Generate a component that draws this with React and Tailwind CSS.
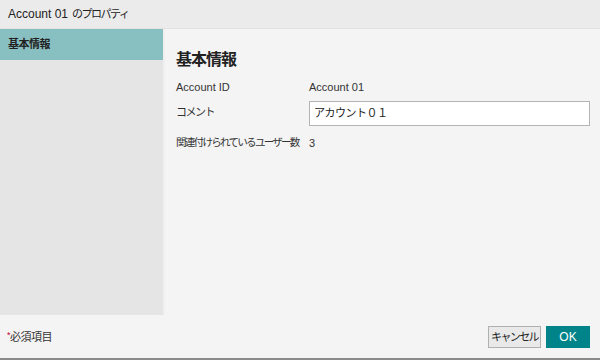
import React from 'react';

const font = { fontFamily: '"Liberation Sans", "Noto Sans CJK JP", sans-serif' };

const Row = ({ label, labelClass = 'text-[11px]', className = '', children }) => (
    <div className={`flex items-center ${className}`}>
        <div className={`w-[133px] shrink-0 whitespace-nowrap text-[#333] ${labelClass}`}>{label}</div>
        <div className="flex-1 text-[11px] text-[#333]">{children}</div>
    </div>
);

const App = () => {
    return (
        <div className="w-[600px] h-[360px] flex flex-col bg-[#f4f4f4] border-b-2 border-[#8a8a8a]" style={font}>
            {/* Title bar */}
            <div className="h-[29px] shrink-0 flex items-center px-2 bg-[#ebebeb] border-b border-[#e2e2e2] text-[12px] text-[#222] whitespace-nowrap">
                Account 01 <span className="ml-[4px] text-[11px] tracking-[-1.5px]">のプロパティ</span>
            </div>

            <div className="flex flex-1 min-h-0">
                {/* Sidebar */}
                <div className="w-[165px] shrink-0 bg-[#e5e5e5] border-r-2 border-[#efefef] mb-[1px]">
                    <div className="h-[31px] flex items-center px-2 bg-[#88bfc1] text-[11px] font-bold tracking-[-0.5px] text-[#222]">
                        基本情報
                    </div>
                </div>

                {/* Content */}
                <div className="flex-1 pl-[11px] pr-[10px] pt-[21px]">
                    <h2 className="h-[20px] leading-[20px] text-[16px] font-bold tracking-[-1px] text-[#222] mb-[7px]">基本情報</h2>
                    <Row label="Account ID" className="h-[20px]">Account 01</Row>
                    <Row label="コメント" labelClass="text-[11px] tracking-[-1.5px] -mt-[3px]" className="mt-[4px]">
                        <div className="h-[25px] bg-white border border-[#b4b4b4] flex items-center px-[4px] text-[11px] tracking-[-0.5px] text-[#222]">
                            アカウント０１
                        </div>
                    </Row>
                    <Row label="関連付けられているユーザー数" labelClass="text-[10.5px] tracking-[-1.7px]" className="h-[20px] mt-[7px]">3</Row>
                </div>
            </div>

            {/* Footer */}
            <div className="h-[42px] shrink-0 flex items-center justify-between pl-[7px] pr-[10px]">
                <div className="text-[11px] tracking-[-0.5px] text-[#333]">
                    <span className="text-[#c0002a] text-[9px] align-top">*</span>必須項目
                </div>
                <div className="flex gap-[5px]">
                    <button className="h-[22px] px-[2px] bg-[#e9e9e9] border border-[#b0b0b0] text-[11px] tracking-[-1.6px] text-[#222] whitespace-nowrap">
                        キャンセル
                    </button>
                    <button className="h-[22px] w-[44px] bg-[#00848a] text-white text-[12px]">
                        OK
                    </button>
                </div>
            </div>
        </div>
    );
};

export default App;
